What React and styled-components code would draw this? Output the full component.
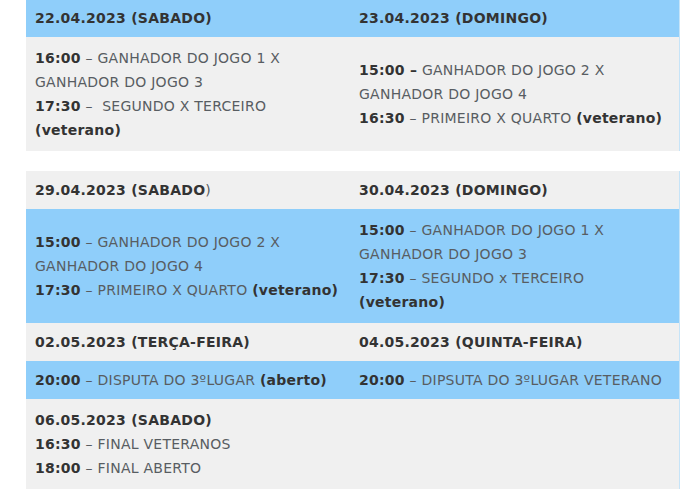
import React from 'react'
import styled, { createGlobalStyle } from 'styled-components'

const GlobalStyle = createGlobalStyle`
  body {
    margin: 0;
    background: #ffffff;
    font-family: "DejaVu Sans", Verdana, sans-serif;
  }
`

const schedule = [
  [
    {
      tone: 'blue',
      head: true,
      cells: [[[{ b: '22.04.2023 (SABADO)' }]], [[{ b: '23.04.2023 (DOMINGO)' }]]],
    },
    {
      tone: 'grey',
      cells: [
        [
          [{ b: '16:00' }, { t: ' – GANHADOR DO JOGO 1 X' }],
          [{ t: 'GANHADOR DO JOGO 3' }],
          [{ b: '17:30' }, { t: ' –\u00a0 SEGUNDO X TERCEIRO' }],
          [{ b: '(veterano)' }],
        ],
        [
          [{ b: '15:00 –' }, { t: ' GANHADOR DO JOGO 2 X' }],
          [{ t: 'GANHADOR DO JOGO 4' }],
          [{ b: '16:30' }, { t: ' – PRIMEIRO X QUARTO ' }, { b: '(veterano)' }],
        ],
      ],
    },
  ],
  [
    {
      tone: 'grey',
      head: true,
      cells: [[[{ b: '29.04.2023 (SABADO' }, { t: ')' }]], [[{ b: '30.04.2023 (DOMINGO)' }]]],
    },
    {
      tone: 'blue',
      cells: [
        [
          [{ b: '15:00' }, { t: ' – GANHADOR DO JOGO 2 X' }],
          [{ t: 'GANHADOR DO JOGO 4' }],
          [{ b: '17:30' }, { t: ' – PRIMEIRO X QUARTO ' }, { b: '(veterano)' }],
        ],
        [
          [{ b: '15:00' }, { t: ' – GANHADOR DO JOGO 1 X' }],
          [{ t: 'GANHADOR DO JOGO 3' }],
          [{ b: '17:30' }, { t: ' – SEGUNDO x TERCEIRO' }],
          [{ b: '(veterano)' }],
        ],
      ],
    },
    {
      tone: 'grey',
      head: true,
      cells: [[[{ b: '02.05.2023 (TERÇA-FEIRA)' }]], [[{ b: '04.05.2023 (QUINTA-FEIRA)' }]]],
    },
    {
      tone: 'blue',
      head: true,
      cells: [
        [[{ b: '20:00' }, { t: ' – DISPUTA DO 3ºLUGAR ' }, { b: '(aberto)' }]],
        [[{ b: '20:00' }, { t: ' – DIPSUTA DO 3ºLUGAR VETERANO' }]],
      ],
    },
    {
      tone: 'grey',
      cells: [
        [
          [{ b: '06.05.2023 (SABADO)' }],
          [{ b: '16:30' }, { t: ' – FINAL VETERANOS' }],
          [{ b: '18:00' }, { t: ' – FINAL ABERTO' }],
        ],
        [],
      ],
    },
  ],
]

const App = () => {
  return (
    <>
      <GlobalStyle />
      <Page>
        {schedule.map((table, ti) => (
          <Table key={ti}>
            {table.map((row, ri) => (
              <Row key={ri} tone={row.tone}>
                {row.cells.map((lines, ci) => (
                  <Cell key={ci} head={row.head}>
                    {lines.map((line, li) => (
                      <Line key={li}>
                        {line.map((part, pi) =>
                          part.b ? <Strong key={pi}>{part.b}</Strong> : <span key={pi}>{part.t}</span>
                        )}
                      </Line>
                    ))}
                  </Cell>
                ))}
              </Row>
            ))}
          </Table>
        ))}
      </Page>
    </>
  )
}

export default App

const Page = styled.div`
  margin-top: -1px;
  padding: 0 0 0 26px;
  display: flex;
  flex-direction: column;
  gap: 20px;
`

const Table = styled.div`
  width: 653px;
  border-right: 1px solid #c6e4f8;
  display: flex;
  flex-direction: column;
`

const Row = styled.div`
  display: grid;
  grid-template-columns: 324px 1fr;
  background: ${(p) => (p.tone === 'blue' ? '#8fcefa' : '#f0f0f0')};
`

const Cell = styled.div`
  display: flex;
  flex-direction: column;
  justify-content: center;
  padding: ${(p) => (p.head ? '7px 9px' : '9px 9px')};
  font-size: 14px;
  letter-spacing: 0.25px;
  line-height: 24px;
  color: #585d62;
`

const Line = styled.div`
  white-space: nowrap;
`

const Strong = styled.b`
  font-weight: 700;
  color: #333333;
`
